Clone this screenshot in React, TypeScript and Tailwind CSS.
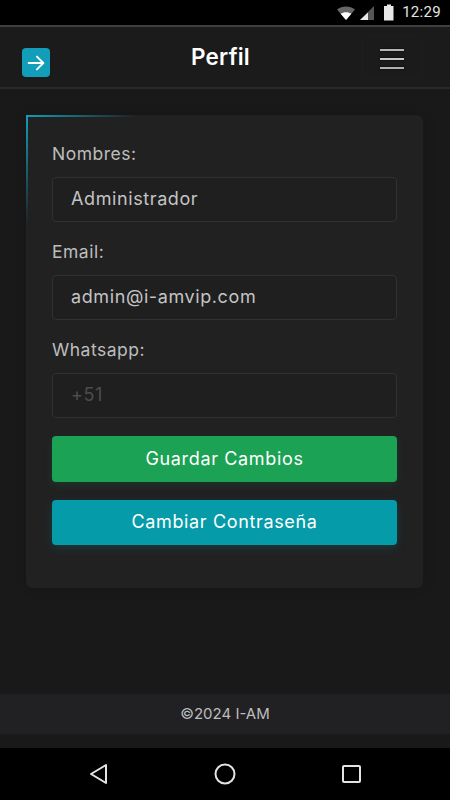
const sans = "font-['Inter','Liberation_Sans',sans-serif]";

function StatusBar() {
  return (
    <div className="flex h-[25px] items-center justify-end bg-black pr-[9px]">
      <svg width="20" height="16" viewBox="0 0 20 16" className="mr-[2px]">
        <path d="M1 4.5 C6 0.5 14 0.5 19 4.5 L10 15 Z" fill="#666" />
        <path d="M4.6 8.7 C7.6 6.6 12.4 6.6 15.4 8.7 L10 15 Z" fill="#fff" />
      </svg>
      <svg width="16" height="16" viewBox="0 0 16 16" className="ml-[1px]">
        <path d="M15 1 V15 H1 Z" fill="#555" />
        <path d="M9 7.5 V15 H1 Z" fill="#e8e8e8" />
      </svg>
      <svg width="12" height="17" viewBox="0 0 12 17" className="ml-[8px]">
        <path d="M4 0.5 H8 V2 H10.5 V16.5 H1 V2 H4 Z" fill="#e8e8e8" />
      </svg>
      <span className="ml-[7px] font-['Roboto',sans-serif] text-[15px] leading-none tracking-[0.3px] text-[#e4e4e4]">12:29</span>
    </div>
  );
}

function Header() {
  return (
    <header className="flex h-[64px] shrink-0 items-center justify-between border-t-2 border-b-2 border-t-[#3f3f3f] border-b-[#2a2a2a] bg-[#1b1b1b] pl-[22px] pr-[27px]">
      <div className="mt-[11px] flex h-[29px] w-[28px] items-center justify-center rounded-[4px] bg-[#129eb8]">
        <svg width="22" height="22" viewBox="0 0 24 24" fill="none" stroke="#fff" strokeWidth="2" strokeLinecap="round" strokeLinejoin="round">
          <path d="M4 12 H20" />
          <path d="M13 5 L20 12 L13 19" />
        </svg>
      </div>
      <h1 className="ml-[29px] text-[22.5px] font-semibold leading-none tracking-[0.2px] text-white">Perfil</h1>
      <button className="flex h-[43px] w-[61px] flex-col items-center justify-center gap-[7px] rounded-[6px] border border-[#1e1e1e] pt-[3px]">
        <span className="h-[2px] w-[24px] bg-[#b5b5b5] shadow-[0_0_2px_#000]" />
        <span className="h-[2px] w-[24px] bg-[#c8c8c8] shadow-[0_0_2px_#000]" />
        <span className="h-[2px] w-[24px] bg-[#b0b0b0] shadow-[0_0_2px_#000]" />
      </button>
    </header>
  );
}

function Field({ label, value, muted }: { label: string; value: string; muted?: boolean }) {
  return (
    <div className="mb-[17px]">
      <label className="mb-[10px] block text-[17.5px] leading-[26px] tracking-[0.5px] text-[#bdbdbd]">{label}</label>
      <div className={`flex h-[45px] items-center rounded-[4px] border border-[#313133] bg-[#1f1f20] px-[18px] pb-[2px] text-[18px] tracking-[0.6px] ${muted ? "text-[#4d4d4d]" : "text-[#c4c4c4]"}`}>
        {value}
      </div>
    </div>
  );
}

export default function App() {
  return (
    <div className={`flex h-[800px] w-[450px] flex-col overflow-hidden bg-[#191919] ${sans}`}>
      <StatusBar />
      <Header />
      <main className="flex-1 px-[26px] pt-[26px]">
        <section className="relative h-[473px] w-[397px] rounded-[6px] rounded-tl-none bg-[#212122] px-[26px] pt-[26px] shadow-[0_0_12px_rgba(0,0,0,0.15)]">
          <div className="absolute left-0 top-0 h-[2px] w-[110px] bg-gradient-to-r from-[#129eb8] to-transparent" />
          <div className="absolute left-0 top-0 h-[110px] w-[2px] bg-gradient-to-b from-[#129eb8] to-transparent" />
          <Field label="Nombres:" value="Administrador" />
          <Field label="Email:" value="admin@i-amvip.com" />
          <Field label="Whatsapp:" value="+51" muted />
          <button className="mt-[1px] h-[46px] w-full rounded-[4px] bg-[#1ca254] pb-[2px] text-[18px] tracking-[0.65px] text-white shadow-[0_3px_8px_rgba(28,162,84,0.15)]">
            Guardar Cambios
          </button>
          <button className="mt-[18px] h-[45px] w-full rounded-[4px] bg-[#069ba8] pb-[3px] text-[18px] tracking-[0.65px] text-white shadow-[0_3px_8px_rgba(6,155,168,0.2)]">
            Cambiar Contraseña
          </button>
        </section>
      </main>
      <footer className="mb-[14px] flex h-[40px] items-center justify-center bg-[#212123] text-[15px] text-[#bdbdbd]">
        ©2024 I-AM
      </footer>
      <nav className="relative flex h-[52px] items-center bg-black">
        <svg width="20" height="22" viewBox="0 0 20 22" fill="none" stroke="#e4e4e4" strokeWidth="2" strokeLinejoin="round" className="ml-[89px]">
          <path d="M17 2 V20 L2 11 Z" />
        </svg>
        <svg width="22" height="22" viewBox="0 0 22 22" fill="none" stroke="#e4e4e4" strokeWidth="2" className="ml-[105px]">
          <circle cx="11" cy="11" r="9.5" />
        </svg>
        <svg width="19" height="18" viewBox="0 0 19 18" fill="none" stroke="#e4e4e4" strokeWidth="2" className="ml-[106px]">
          <rect x="1" y="1" width="17" height="16" rx="1" />
        </svg>
      </nav>
    </div>
  );
}
